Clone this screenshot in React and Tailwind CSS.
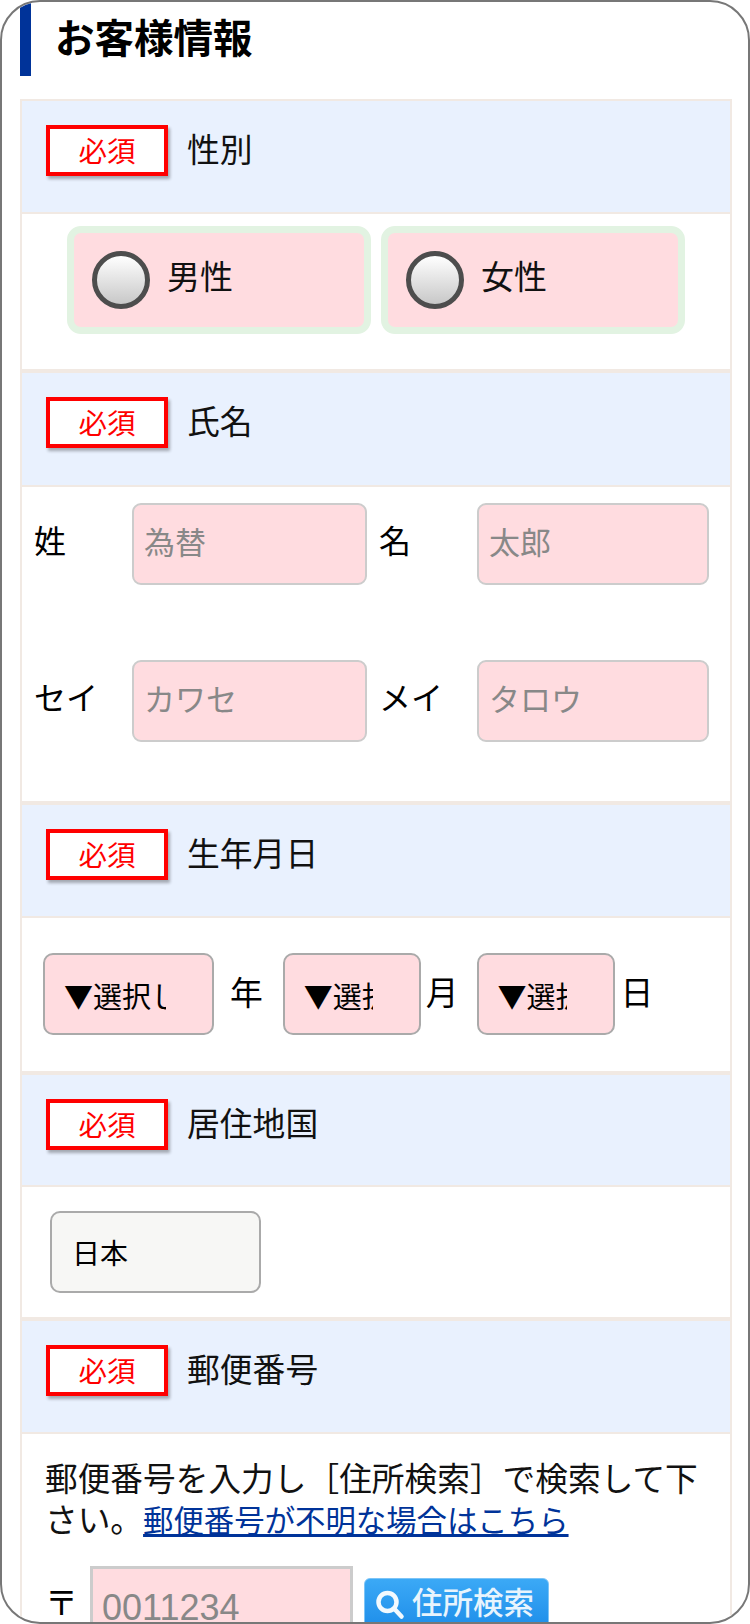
import React from 'react';

const font = "font-['Noto_Sans_CJK_JP','Noto_Sans',sans-serif]";

// Section header row with the red "required" badge
const SectionHeader = ({ title, className = '' }) => (
  <div className={`flex items-start gap-[19px] bg-[#e9f1fe] border-y-2 border-[#f1e9e3] pl-[24px] pt-[24px] ${className}`}>
    <span className="flex h-[51px] w-[122px] items-center justify-center border-[4px] border-[#ff0000] bg-white text-[28.5px] leading-none text-[#ff0000] shadow-[2px_3px_3px_rgba(0,0,0,0.3)]">
      必須
    </span>
    <span className="text-[32.8px] leading-[45px] text-[#111]">{title}</span>
  </div>
);

const RadioOption = ({ label }) => (
  <label className="flex h-[108px] w-[304px] items-center gap-[17px] rounded-[14px] border-[7px] border-[#e2f3e2] bg-[#ffdce0] pl-[18px]">
    <input
      type="radio"
      name="gender"
      className="h-[58px] w-[58px] appearance-none rounded-full border-[5px] border-[#4d4d4d] bg-linear-to-b from-white to-[#c8c8c8]"
    />
    <span className="pb-[10px] text-[33px] leading-none text-[#111]">{label}</span>
  </label>
);

const NameInput = ({ placeholder, width }) => (
  <input
    placeholder={placeholder}
    className={`h-[82px] ${width} rounded-[9px] border-2 border-[#ccc] bg-[#ffdce0] px-[10px] pb-[8px] text-[31px] placeholder:text-[#888]`}
  />
);

const NameRow = ({ label1, label2, ph1, ph2, className = '' }) => (
  <div className={`flex items-center ${className}`}>
    <span className="w-[98px] pb-[10px] text-[32px] text-black">{label1}</span>
    <NameInput placeholder={ph1} width="w-[235px]" />
    <span className="ml-[12px] w-[98px] pb-[10px] text-[32px] text-black">{label2}</span>
    <NameInput placeholder={ph2} width="w-[232px]" />
  </div>
);

const DateSelect = ({ width }) => (
  <select className={`h-[82px] ${width} appearance-none rounded-[10px] border-2 border-[#aaa] bg-[#ffdce0] pl-[19px] pr-[46px] pt-[4px] text-[29px] text-black`}>
    <option>▼選択してください</option>
  </select>
);

export default function App() {
  return (
    <div className={`h-[1624px] w-[750px] overflow-hidden rounded-[40px] border-2 border-[#777] bg-white ${font}`}>
      <h2 className="ml-[18px] flex h-[74px] items-center border-l-[11px] border-[#003399] pb-[6px] pl-[24px] text-[39.5px] font-bold leading-none text-black">
        お客様情報
      </h2>

      <div className="ml-[18px] mt-[23px] w-[712px] border-x-2 border-[#f1e9e3]">
        <SectionHeader title="性別" className="h-[115px]" />
        <div className="flex h-[157px] gap-[10px] border-b-2 border-[#f1e9e3] pl-[45px] pt-[12px]">
          <RadioOption label="男性" />
          <RadioOption label="女性" />
        </div>

        <SectionHeader title="氏名" className="h-[116px]" />
        <div className="h-[316px] border-b-2 border-[#f1e9e3] pl-[12px] pt-[16px]">
          <NameRow label1="姓" label2="名" ph1="為替" ph2="太郎" />
          <NameRow label1="セイ" label2="メイ" ph1="カワセ" ph2="タロウ" className="mt-[75px]" />
        </div>

        <SectionHeader title="生年月日" className="h-[115px]" />
        <div className="flex h-[155px] items-start border-b-2 border-[#f1e9e3] pl-[21px] pt-[35px] text-[32.8px] text-black">
          <DateSelect width="w-[171px]" />
          <span className="ml-[16px] mr-[20px] leading-[76px]">年</span>
          <DateSelect width="w-[138px]" />
          <span className="ml-[5px] mr-[18px] leading-[76px]">月</span>
          <DateSelect width="w-[138px]" />
          <span className="ml-[6px] leading-[76px]">日</span>
        </div>

        <SectionHeader title="居住地国" className="h-[114px]" />
        <div className="h-[132px] border-b-2 border-[#f1e9e3] pl-[28px] pt-[24px]">
          <div className="flex h-[82px] w-[211px] items-center rounded-[10px] border-2 border-[#aaa] bg-[#f7f7f5] pl-[20px] text-[28px] text-black">
            日本
          </div>
        </div>

        <SectionHeader title="郵便番号" className="h-[115px]" />
        <div className="pl-[23px] pt-[22px]">
          <p className="w-[670px] text-[32.7px] leading-[41px] text-[#111]">
            郵便番号を入力し［住所検索］で検索して下さい。
            <a href="#" className="text-[30.4px] text-[#003399] underline">郵便番号が不明な場合はこちら</a>
          </p>
          <div className="mt-[26px] flex items-start">
            <span className="w-[45px] pt-[8px] text-[33px] leading-[54px] text-black">〒</span>
            <input
              placeholder="0011234"
              className="h-[80px] w-[263px] border-[3px] border-[#ccc] bg-[#ffdce0] pl-[9px] pt-[4px] font-['Liberation_Sans',sans-serif] text-[36px] placeholder:text-[#888]"
            />
            <button className="ml-[11px] mt-[12px] flex h-[56px] w-[185px] items-center gap-[7px] rounded-[6px] border border-[#7cc4f7] bg-linear-to-b from-[#3ba9f6] to-[#1a8be8] pb-[10px] pl-[10px] text-[30.5px] font-medium leading-none text-[#e8f4fd]">
              <svg width="30" height="30" viewBox="0 0 30 30" fill="none" stroke="#f2f9fe" strokeWidth="4.5" strokeLinecap="round" className="mt-[8px]">
                <circle cx="12.5" cy="12" r="9" />
                <path d="M19.5 19l7 7.5" />
              </svg>
              住所検索
            </button>
          </div>
        </div>
      </div>
    </div>
  );
}
